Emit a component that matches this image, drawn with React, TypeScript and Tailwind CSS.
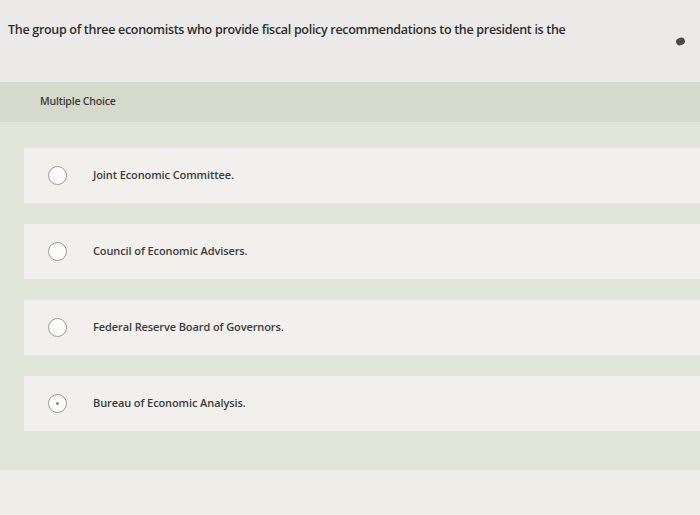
export default function App() {
  const options = [
    "Joint Economic Committee.",
    "Council of Economic Advisers.",
    "Federal Reserve Board of Governors.",
    "Bureau of Economic Analysis.",
  ];

  return (
    <div
      className="w-[700px] h-[515px] overflow-hidden bg-[#ebeae8] flex flex-col"
      style={{ fontFamily: '"Open Sans", "Liberation Sans", Arial, sans-serif' }}
    >
      {/* question */}
      <div className="relative h-[82px] pl-[8px] pt-[21px]">
        <p className="text-[12.5px] leading-[18px] tracking-[-0.3px] font-semibold text-[#2e2e2e]">
          The group of three economists who provide fiscal policy recommendations to the president is the
        </p>
        <span className="absolute left-[676px] top-[38px] w-[9px] h-[7px] rounded-full bg-[#4a4a48] rotate-[-20deg]" />
      </div>

      {/* panel */}
      <div className="bg-[#e2e5da] h-[388px] flex flex-col">
        <div className="h-[40px] bg-[#d6dacd] flex items-center pl-[40px]">
          <span className="text-[10.5px] font-semibold text-[#3a3a3a] tracking-[-0.2px]">Multiple Choice</span>
        </div>
        <div className="flex flex-col gap-[21px] pt-[26px] pl-[24px]">
          {options.map((o, i) => (
            <div key={o} className="h-[55px] bg-[#f1f0ec] flex items-center">
              <span className="ml-[24px] w-[19px] h-[19px] rounded-full border-[1.5px] border-[#9a9a98] bg-[#fbfbfa] flex items-center justify-center">
                {i === 3 && <span className="w-[3px] h-[3px] rounded-full bg-[#8a8a86]" />}
              </span>
              <span className="ml-[26px] text-[11px] font-semibold text-[#3c3c3c] tracking-[-0.1px]">{o}</span>
            </div>
          ))}
        </div>
      </div>

      <div className="flex-1 bg-[#efede8]" />
    </div>
  );
}
